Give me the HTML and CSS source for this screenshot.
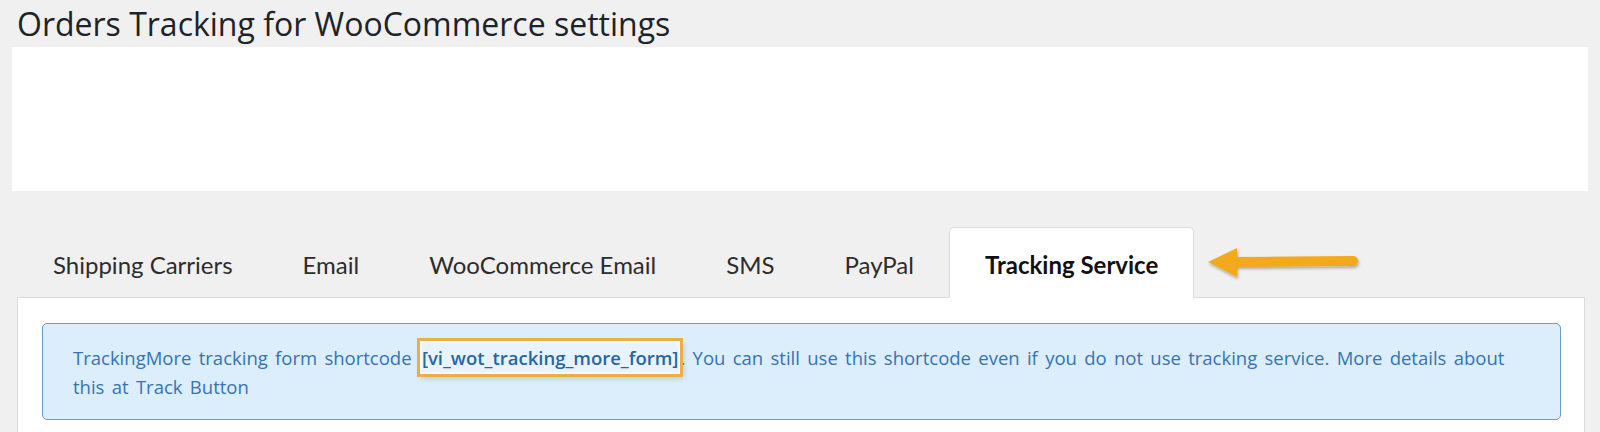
FILE: index.html
```html
<!DOCTYPE html>
<html lang="en">
<head>
    <meta charset="UTF-8">
    <title>Orders Tracking for WooCommerce settings</title>
    <link rel="stylesheet" href="styles.css">
</head>
<body>
    <h1 class="title">Orders Tracking for WooCommerce settings</h1>
    <div class="banner"></div>
    <div class="tabs">
        <div class="tab">Shipping Carriers</div>
        <div class="tab">Email</div>
        <div class="tab">WooCommerce Email</div>
        <div class="tab">SMS</div>
        <div class="tab">PayPal</div>
        <div class="tab active">Tracking Service</div>
        <!-- annotation arrow -->
        <svg class="arrow" width="160" height="40" viewBox="0 0 160 40">
            <defs>
                <filter id="sh" x="-10%" y="-30%" width="130%" height="180%">
                    <feDropShadow dx="1" dy="2" stdDeviation="1.5" flood-color="#000" flood-opacity="0.3"/>
                </filter>
            </defs>
            <g filter="url(#sh)">
                <line x1="28" y1="18" x2="147" y2="17" stroke="#f2aa1e" stroke-width="10" stroke-linecap="round"/>
                <polygon points="2,18 31,4 31,33" fill="#f2aa1e"/>
            </g>
        </svg>
    </div>
    <div class="panel">
        <div class="notice">
            TrackingMore tracking form shortcode <span class="code">[vi_wot_tracking_more_form]</span>. You can still use this shortcode even if you do not use tracking service. More details about this at Track Button
        </div>
    </div>
</body>
</html>
```

FILE: styles.css
```css
body { margin: 0; background: #f0f0f0; font-family: 'Open Sans', sans-serif; overflow: hidden; }
.title { margin: 0; padding: 0 0 0 17px; height: 47px; font-size: 32px; font-weight: 400; line-height: 48px; color: #1d2327; }
.banner { background: #fff; height: 144px; margin: 0 12px; }
.tabs { position: relative; display: flex; margin: 36px 0 0 18px; height: 70px; font-family: Lato, sans-serif; font-size: 24px; }
.tab { padding: 0 35px; line-height: 76px; color: #2c2c2c; }
.tab.active { background: #fff; border: 1px solid #dcdcdc; border-bottom: none; border-radius: 5px 5px 0 0; margin-bottom: -1px; height: 70px; line-height: 74px; font-weight: 700; color: #111; }
.arrow { position: absolute; left: 1188px; top: 17px; }
.panel { background: #fff; border: 1px solid #dcdcdc; margin: 0 15px 0 17px; padding: 25px 23px 40px 24px; }
.notice { background: #dcedfb; border: 1.5px solid #6b9bc6; border-radius: 5px; padding: 19px 30px 18px 30px; font-size: 18.5px; line-height: 29px; word-spacing: 2.5px; color: #3574b3; }
.code { font-weight: 600; color: #26679f; word-spacing: 0; outline: 3.5px solid #e9b045; outline-offset: 2px; box-shadow: 0 0 0 2px #f4f9fe, 2px 3px 6px 3px rgba(0,0,0,0.18); background: #e8f3fd; padding: 2px 0; margin: 0 2px 0 3px; }
```
